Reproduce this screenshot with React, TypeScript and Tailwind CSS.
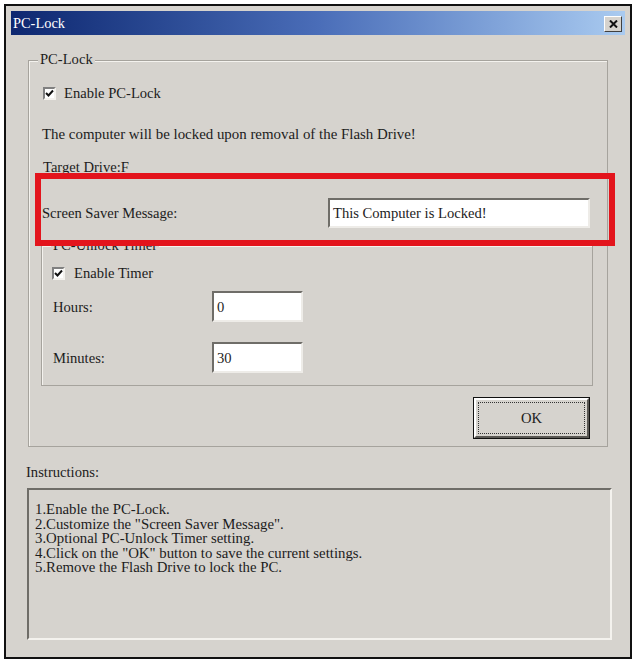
import React from "react";

function CheckBox() {
  return (
    <span className="w-[13px] h-[13px] shrink-0 bg-white border-2 border-t-[#808080] border-l-[#808080] border-r-[#f4f2ee] border-b-[#f4f2ee] flex items-center justify-center">
      <svg width="9" height="9" viewBox="0 0 9 9">
        <path d="M1 4 L3.5 6.5 L8 1.5" stroke="#111" strokeWidth="2" fill="none" />
      </svg>
    </span>
  );
}

function TextBox({ value, className }: { value: string; className: string }) {
  return (
    <div
      className={`bg-white border-2 border-t-[#6f6d68] border-l-[#6f6d68] border-r-[#eeece8] border-b-[#eeece8] flex items-center pl-[3px] ${className}`}
    >
      {value}
    </div>
  );
}

export default function App() {
  return (
    <div className="min-h-screen bg-white text-[14.6px] text-[#1c1c1c] leading-[16px] [font-family:'Liberation_Serif','Times_New_Roman',serif]">
      <div className="relative ml-[4px] mt-[4px] w-[628px] h-[655px] border-2 border-[#111] bg-[#d6d3ce] p-[5px] flex flex-col">
        {/* title bar */}
        <div className="h-[24px] shrink-0 flex items-center justify-between bg-gradient-to-r from-[#0e2770] via-[#4a6db8] to-[#aacbf0] pl-[2px] pr-[3px]">
          <span className="text-white text-[14.4px]">PC-Lock</span>
          <span className="w-[18px] h-[16px] mt-[2px] bg-[#d6d3ce] border border-t-white border-l-white border-r-[#404040] border-b-[#404040] flex items-center justify-center">
            <svg width="9" height="8" viewBox="0 0 9 8">
              <path d="M1 0.5 L8 7.5 M8 0.5 L1 7.5" stroke="#111" strokeWidth="2" />
            </svg>
          </span>
        </div>

        {/* client area */}
        <div className="flex-1 flex flex-col">
          {/* PC-Lock group */}
          <div className="mt-[25px] ml-[17px] w-[580px] border border-[#a6a39d] shadow-[inset_1px_1px_0_#f4f2ee] flex flex-col pl-[12px] pr-[13px] pb-[7px]">
            <span className="-mt-[10px] ml-[-3px] px-[2px] w-fit bg-[#d6d3ce]">PC-Lock</span>

            <div className="mt-[18px] ml-[2px] flex items-center gap-[8px] h-[16px]">
              <CheckBox />
              <span>Enable PC-Lock</span>
            </div>

            <div className="mt-[25px] ml-[1px] text-[14.9px]">
              The computer will be locked upon removal of the Flash Drive!
            </div>

            <div className="mt-[17px] ml-[2px]">Target Drive:F</div>

            <div className="mt-[23px] ml-[1px] flex items-center h-[30px]">
              <span className="w-[286px]">Screen Saver Message:</span>
              <TextBox value="This Computer is Locked!" className="w-[262px] h-[30px]" />
            </div>

            {/* PC-Unlock Timer group */}
            <div className="mt-[17px] w-[552px] border border-[#a6a39d] shadow-[inset_1px_1px_0_#f4f2ee] flex flex-col pl-[10px] pb-[12px]">
              <span className="-mt-[9px] ml-[-1px] px-[2px] w-fit bg-[#d6d3ce]">PC-Unlock Timer</span>

              <div className="mt-[12px] flex items-center gap-[9px] h-[16px]">
                <CheckBox />
                <span>Enable Timer</span>
              </div>

              <div className="mt-[10px] ml-[1px] flex items-center h-[31px]">
                <span className="w-[159px]">Hours:</span>
                <TextBox value="0" className="w-[91px] h-[31px]" />
              </div>

              <div className="mt-[20px] ml-[1px] flex items-center h-[31px]">
                <span className="w-[159px]">Minutes:</span>
                <TextBox value="30" className="w-[91px] h-[31px]" />
              </div>
            </div>

            <button className="mt-[11px] self-end mr-[4px] w-[117px] h-[42px] border border-[#111] bg-[#d6d3ce] p-0">
              <div className="w-full h-full border-2 border-t-white border-l-white border-r-[#5a5854] border-b-[#5a5854] p-[2px]">
                <div className="w-full h-full border border-dotted border-[#333] flex items-center justify-center">
                  OK
                </div>
              </div>
            </button>
          </div>

          <div className="mt-[17px] ml-[15px]">Instructions:</div>

          <div className="mt-[8px] ml-[16px] w-[585px] h-[152px] border-2 border-t-[#6f6d68] border-l-[#6f6d68] border-r-[#f4f2ee] border-b-[#f4f2ee] pt-[12px] pl-[6px] text-[14.8px] leading-[14.5px]">
            <div>1.Enable the PC-Lock.</div>
            <div>2.Customize the "Screen Saver Message".</div>
            <div>3.Optional PC-Unlock Timer setting.</div>
            <div>4.Click on the "OK" button to save the current settings.</div>
            <div>5.Remove the Flash Drive to lock the PC.</div>
          </div>
        </div>

        {/* red highlight */}
        <div className="absolute left-[29px] top-[167px] w-[580px] h-[73px] border-[6px] border-[#e3141c] pointer-events-none" />
      </div>
    </div>
  );
}
